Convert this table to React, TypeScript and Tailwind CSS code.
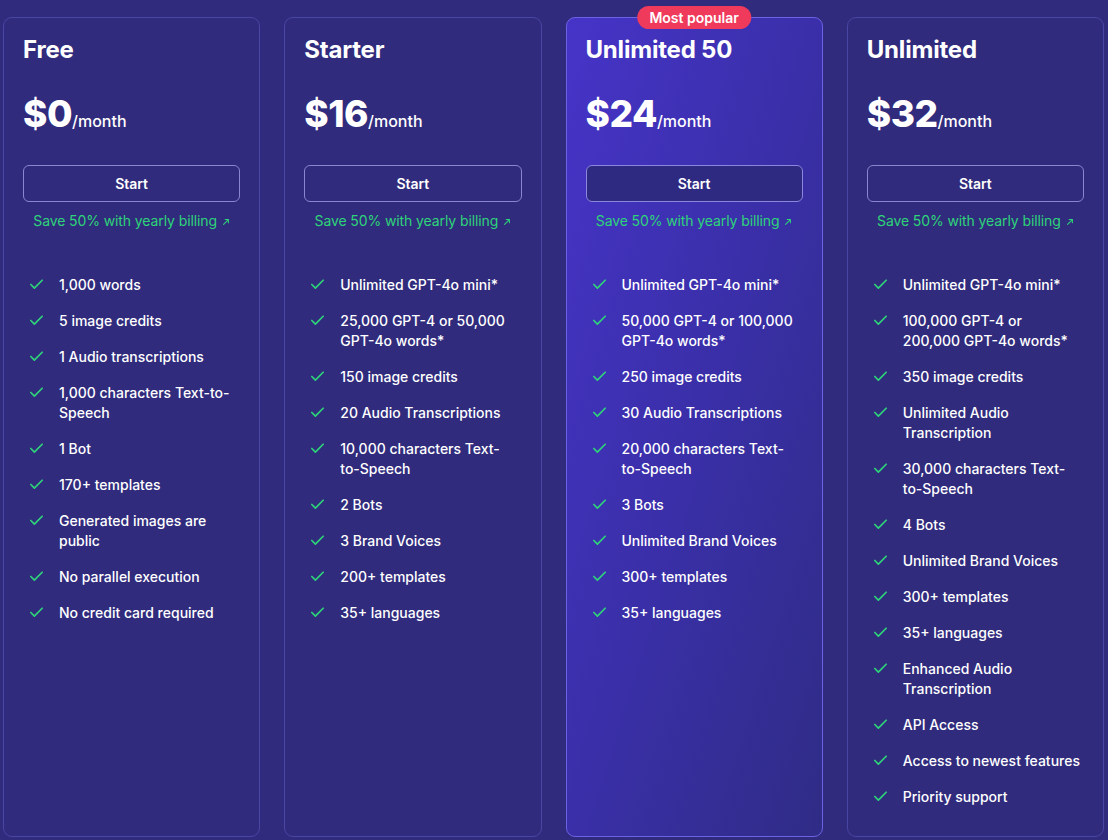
import React from "react";

type Plan = {
  name: string;
  price: string;
  features: string[];
  popular?: boolean;
};

const plans: Plan[] = [
  {
    name: "Free",
    price: "$0",
    features: [
      "1,000 words",
      "5 image credits",
      "1 Audio transcriptions",
      "1,000 characters Text-to-Speech",
      "1 Bot",
      "170+ templates",
      "Generated images are public",
      "No parallel execution",
      "No credit card required",
    ],
  },
  {
    name: "Starter",
    price: "$16",
    features: [
      "Unlimited GPT-4o mini*",
      "25,000 GPT-4 or 50,000 GPT-4o words*",
      "150 image credits",
      "20 Audio Transcriptions",
      "10,000 characters Text-to-Speech",
      "2 Bots",
      "3 Brand Voices",
      "200+ templates",
      "35+ languages",
    ],
  },
  {
    name: "Unlimited 50",
    price: "$24",
    popular: true,
    features: [
      "Unlimited GPT-4o mini*",
      "50,000 GPT-4 or 100,000 GPT-4o words*",
      "250 image credits",
      "30 Audio Transcriptions",
      "20,000 characters Text-to-Speech",
      "3 Bots",
      "Unlimited Brand Voices",
      "300+ templates",
      "35+ languages",
    ],
  },
  {
    name: "Unlimited",
    price: "$32",
    features: [
      "Unlimited GPT-4o mini*",
      "100,000 GPT-4 or 200,000 GPT-4o words*",
      "350 image credits",
      "Unlimited Audio Transcription",
      "30,000 characters Text-to-Speech",
      "4 Bots",
      "Unlimited Brand Voices",
      "300+ templates",
      "35+ languages",
      "Enhanced Audio Transcription",
      "API Access",
      "Access to newest features",
      "Priority support",
    ],
  },
];

function CheckIcon() {
  return (
    <svg width="17" height="17" viewBox="0 0 24 24" fill="none" stroke="#2ed47a" strokeWidth="2.4" strokeLinecap="round" strokeLinejoin="round" className="shrink-0 mt-[1px] -ml-[1px]">
      <path d="M20 6 9 17l-5-5" />
    </svg>
  );
}

function ArrowIcon() {
  return (
    <svg width="8" height="8" viewBox="0 0 10 10" fill="none" stroke="#2ed47a" strokeWidth="1.3" strokeLinecap="round" className="inline-block ml-[5px] mb-[1px]">
      <path d="M2 8 8 2M4 2h4v4" />
    </svg>
  );
}

function Card({ plan }: { plan: Plan }) {
  return (
    <div
      className={
        plan.popular
          ? "relative h-[820px] rounded-[9px] border border-[#6c62e4] bg-gradient-to-br from-[#4634c8] via-[#3a2fa8] to-[#2f2c86] px-[19px] pt-[16px]"
          : "relative h-[820px] rounded-[9px] border border-[#4a46a4] bg-[#302b7c] px-[19px] pt-[16px]"
      }
    >
      {plan.popular && (
        <div className="absolute left-1/2 top-[-12px] -translate-x-1/2 h-[23px] rounded-full bg-[#ef3a5c] px-[12px] text-[14px] font-semibold leading-[23px] text-white whitespace-nowrap">
          Most popular
        </div>
      )}
      <div className="text-[24px] font-bold leading-[32px] text-white tracking-[-0.2px]">{plan.name}</div>
      <div className="mt-[28px] flex items-baseline text-white">
        <span className="text-[37px] font-extrabold leading-[40px] tracking-[-0.5px]">{plan.price}</span>
        <span className="text-[16px] font-medium">/month</span>
      </div>
      <button
        className={
          plan.popular
            ? "mt-[31px] h-[37px] w-full rounded-[6px] border border-[#8d86de] bg-[#2e2a82] text-[14px] font-semibold text-white"
            : "mt-[31px] h-[37px] w-full rounded-[6px] border border-[#8a86cf] bg-transparent text-[14px] font-semibold text-white"
        }
      >
        Start
      </button>
      <div className="mt-[9px] text-center text-[14px] leading-[20px] text-[#2ed47a] tracking-[-0.1px]">
        Save 50% with yearly billing
        <ArrowIcon />
      </div>
      <ul className="mt-[44px] flex flex-col gap-[16px] pl-[6px] pr-[3px]">
        {plan.features.map((f) => (
          <li key={f} className="flex items-start gap-[14px] text-[14px] leading-[20px] text-white font-medium">
            <CheckIcon />
            <span>{f}</span>
          </li>
        ))}
      </ul>
    </div>
  );
}

export default function App() {
  return (
    <div
      className="min-h-[840px] w-[1108px] bg-[#302b7c] pl-[3px] pr-[4px] pt-[17px]"
      style={{ fontFamily: "Inter, 'Noto Sans', sans-serif" }}
    >
      <div className="grid grid-cols-4 gap-[24px]">
        {plans.map((p) => (
          <Card key={p.name} plan={p} />
        ))}
      </div>
    </div>
  );
}
